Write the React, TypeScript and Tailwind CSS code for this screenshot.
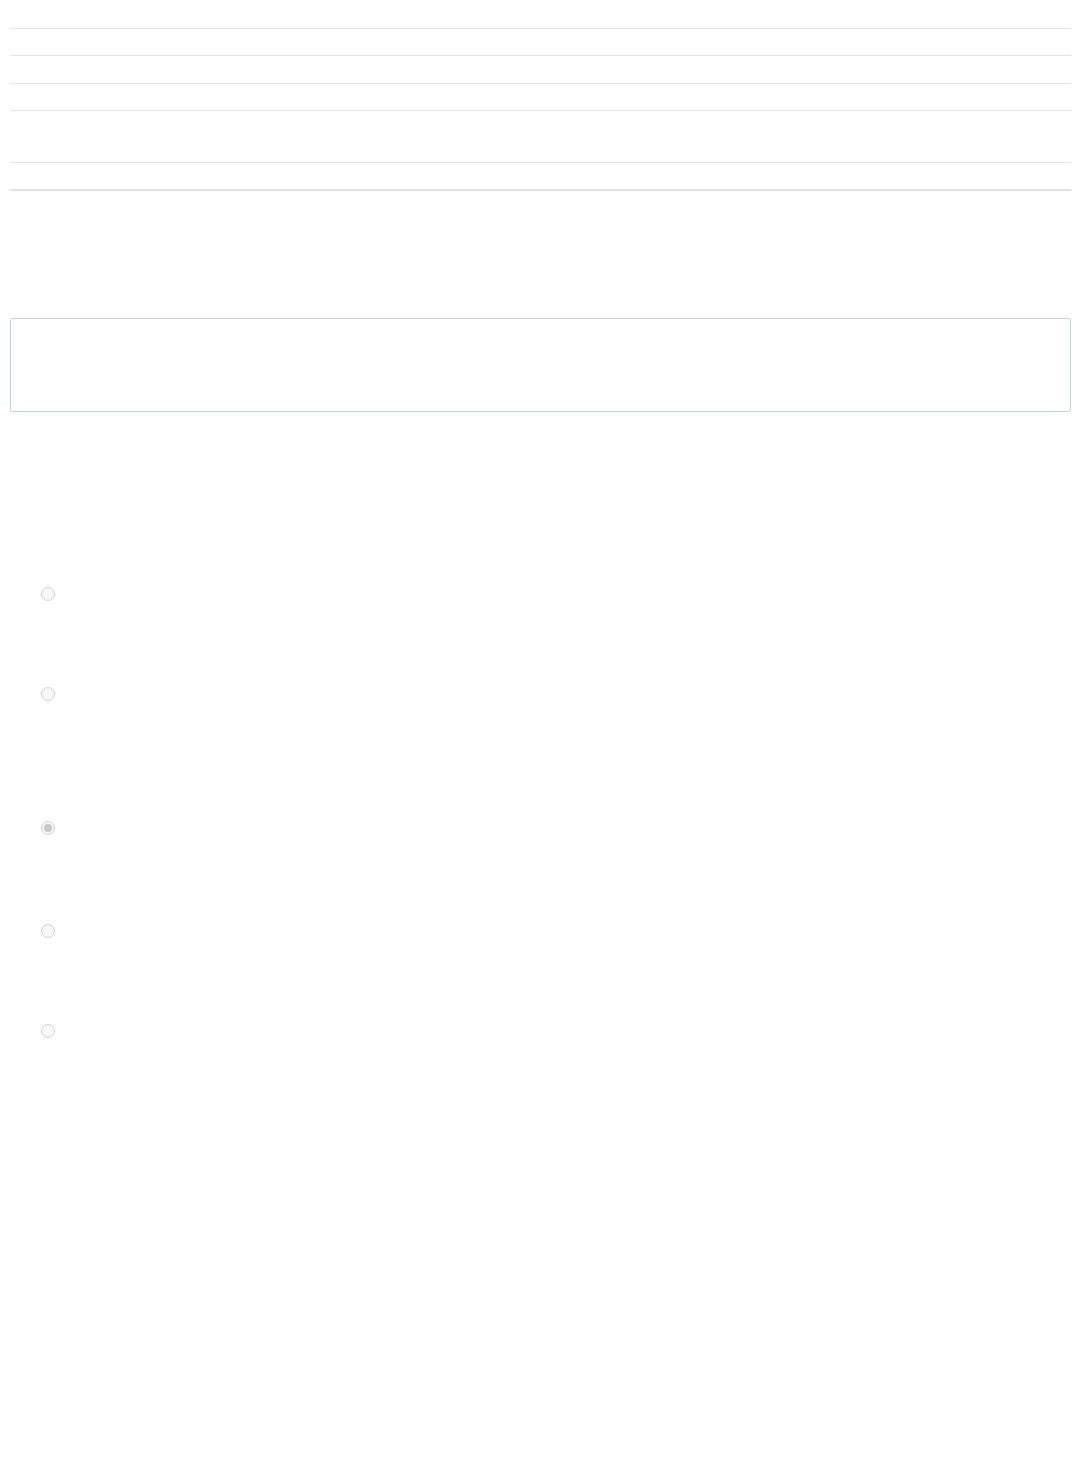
function Radio({ checked = false, className = "" }: { checked?: boolean; className?: string }) {
    return (
        <span className={`flex items-center justify-center w-[14px] h-[14px] rounded-full border border-[#cfcfcf] bg-[#f7f7f7] ${className}`}>
            {checked && <span className="block w-[8px] h-[8px] rounded-full bg-[#c9c9c9]"></span>}
        </span>
    )
}

export default function App() {
    const rows = [
        "h-[29px] border-b border-[#e1e1e6]",
        "h-[27px] border-b border-[#e1e1e6]",
        "h-[28px] border-b border-[#e1e1e6]",
        "h-[27px] border-b border-[#e1e1e6]",
        "h-[52px] border-b border-[#e1e1e6]",
        "h-[28px] border-b-2 border-[#dee2e6]",
    ]

    return (
        <div className="bg-white min-h-[1480px] w-full font-['Liberation_Sans',sans-serif]">
            <div className="ml-[10px] w-[1061px]">
                {rows.map((cls, i) => (
                    <div key={i} className={cls}></div>
                ))}
            </div>
            <div className="ml-[10px] mt-[127px] w-[1061px] h-[94px] border border-[#c9ced8] rounded-[2px]"></div>
            <div className="flex flex-col items-start pl-[41px] pt-[175px]">
                <Radio />
                <Radio className="mt-[86px]" />
                <Radio checked className="mt-[120px]" />
                <Radio className="mt-[89px]" />
                <Radio className="mt-[86px]" />
            </div>
        </div>
    )
}
